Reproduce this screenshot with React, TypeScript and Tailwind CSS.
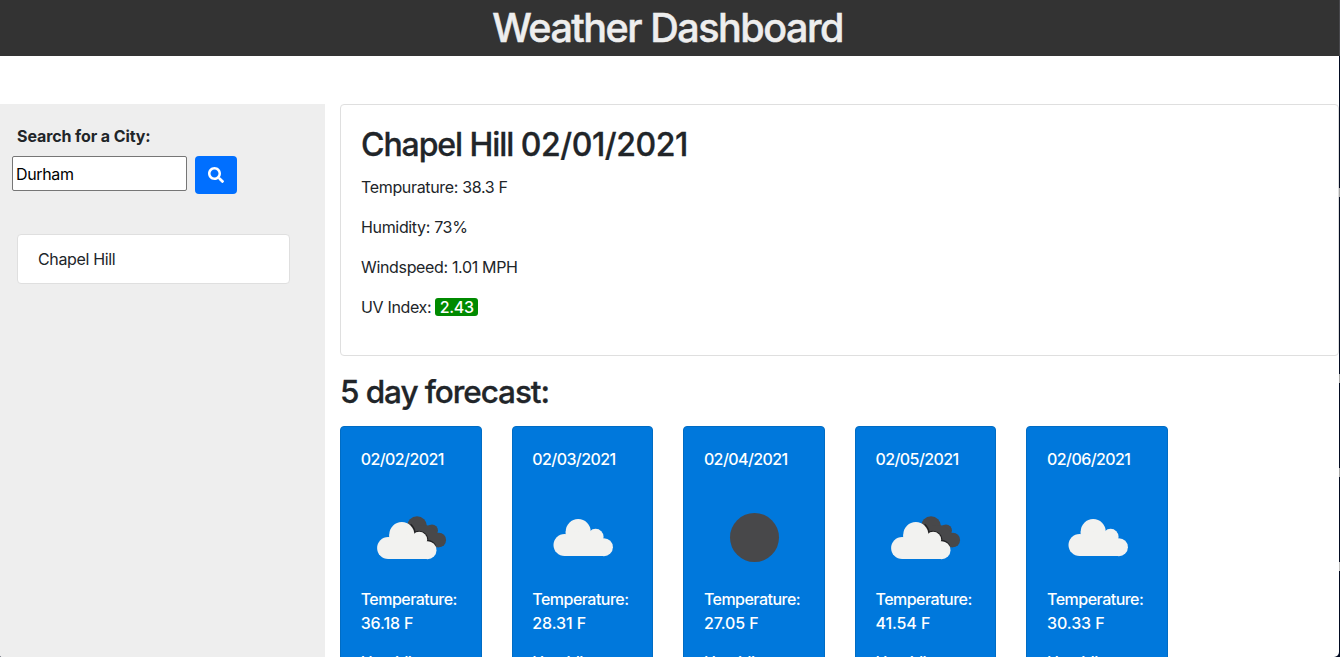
import { FaSearch } from "react-icons/fa";

type Sky = "broken" | "scattered" | "clear";

interface Day {
  date: string;
  sky: Sky;
  temperature: string;
  humidity: string;
}

const conditions = ["Tempurature: 38.3 F", "Humidity: 73%", "Windspeed: 1.01 MPH"];

const days: Day[] = [
  { date: "02/02/2021", sky: "broken", temperature: "36.18 F", humidity: "64%" },
  { date: "02/03/2021", sky: "scattered", temperature: "28.31 F", humidity: "62%" },
  { date: "02/04/2021", sky: "clear", temperature: "27.05 F", humidity: "61%" },
  { date: "02/05/2021", sky: "broken", temperature: "41.54 F", humidity: "66%" },
  { date: "02/06/2021", sky: "scattered", temperature: "30.33 F", humidity: "70%" },
];

function Cloud() {
  return (
    <g fill="#f2f2f0">
      <circle cx="27.2" cy="61" r="11.1" />
      <circle cx="40.8" cy="47.6" r="12.5" />
      <circle cx="58.2" cy="52.8" r="8" />
      <circle cx="66.5" cy="63.2" r="9" />
      <path d="M27.2 72.1H66.5V58L58 48L28.3 47.6V50Z" />
    </g>
  );
}

function SkyIcon({ sky }: { sky: Sky }) {
  return (
    <svg viewBox="0 0 100 100" className="block size-[100px]">
      {sky === "clear" && <circle cx="50.5" cy="50.5" r="24.5" fill="#48484a" />}
      {sky === "scattered" && (
        <g transform="translate(5.4 -3)">
          <Cloud />
        </g>
      )}
      {sky === "broken" && (
        <>
          <g fill="#48484a">
            <circle cx="56" cy="39.2" r="10" />
            <circle cx="71" cy="43.4" r="6" />
            <circle cx="77.8" cy="53" r="7.3" />
            <path d="M56 38L69 38.5L78 48V60.3H74L56 58Z" />
          </g>
          <path
            d="M49.6 37.3A13.4 13.4 0 0 1 54 45.4A8.8 8.8 0 0 1 66.7 53.4A10 10 0 0 1 74.4 58.6"
            fill="none"
            stroke="#222224"
            strokeWidth="1.4"
          />
          <Cloud />
        </>
      )}
    </svg>
  );
}

function DayCard({ day }: { day: Day }) {
  return (
    <article className="h-[320px] w-[141.6px] shrink-0 rounded border border-[#006cc4] bg-[#0078dc] py-5 pr-5 pl-[19.7px] font-medium tracking-[-0.52px] text-white">
      <p className="mb-4 tracking-[-0.58px]">{day.date}</p>
      <SkyIcon sky={day.sky} />
      <p className="mb-[15px]">
        Temperature: <span className="tracking-[-0.1px]">{day.temperature}</span>
      </p>
      <p>Humidity: {day.humidity}</p>
    </article>
  );
}

export default function App() {
  return (
    <div className="flex h-[657px] overflow-hidden bg-[#020b22] font-['Inter',sans-serif] text-base leading-6 text-[#212529]">
      <div className="flex min-w-0 flex-1 flex-col overflow-hidden rounded-br-[5px] rounded-bl-[2px] bg-white">
        <header className="flex h-14 shrink-0 items-center justify-center bg-[#333] pr-1">
          <h1 className="text-[39.5px] leading-12 font-medium tracking-[-1.48px] text-[#eee] [-webkit-text-stroke:0.5px_#eee]">
            Weather Dashboard
          </h1>
        </header>
        <div className="flex min-h-0 flex-1 pt-12">
          <aside className="w-[325px] shrink-0 bg-[#eee] pt-5 pl-3">
            <label htmlFor="city" className="block pl-[5px] font-bold tracking-[-0.1px]">
              Search for a City:
            </label>
            <div className="mt-2 flex items-start gap-2">
              <input
                id="city"
                defaultValue="Durham"
                className="h-[35px] w-[175px] rounded-xs border border-[#767676] bg-white px-[3px] tracking-[-0.35px] text-black outline-none"
              />
              <button aria-label="Search" className="flex h-[38px] w-[42px] items-center justify-center rounded bg-[#006fff] text-white">
                <FaSearch className="size-4" />
              </button>
            </div>
            <ul className="mt-10 ml-[5px] w-[273px] rounded border border-[#dfdfdf] bg-white">
              <li className="px-5 py-3 tracking-[-0.34px]">Chapel Hill</li>
            </ul>
          </aside>
          <main className="min-w-0 flex-1 pl-[15px]">
            <section className="h-[252px] rounded border border-[#dfdfdf] px-5 pt-5">
              <h2 className="text-[32px] leading-[39px] font-medium tracking-[-1.08px] [-webkit-text-stroke:0.3px_#212529]">
                Chapel Hill <span className="tracking-[-0.4px]">02/01/2021</span>
              </h2>
              <div className="mt-[11px] flex flex-col gap-4 tracking-[-0.34px]">
                {conditions.map((line) => (
                  <p key={line}>{line}</p>
                ))}
                <p className="flex items-center gap-1">
                  UV Index:
                  <span className="flex h-[18px] w-[43px] items-center justify-center rounded-[3px] bg-[#008a00] font-medium text-white">
                    2.43
                  </span>
                </p>
              </div>
            </section>
            <h2 className="mt-[17px] mb-[15px] text-[31.5px] leading-[38px] font-medium tracking-[-1.08px] [-webkit-text-stroke:0.3px_#212529]">
              5 day forecast:
            </h2>
            <div className="flex gap-[30px]">
              {days.map((day) => (
                <DayCard key={day.date} day={day} />
              ))}
            </div>
          </main>
        </div>
      </div>
      <div className="flex w-px shrink-0 flex-col">
        <div className="h-14 bg-[#48484c]" />
        <div className="mt-[132px] h-[9px] bg-[#a8a8a8]" />
        <div className="mt-[177px] h-[9px] bg-[#a8a8a8]" />
        <div className="mt-[85px] h-[9px] bg-[#a8a8a8]" />
        <div className="mt-[85px] h-[9px] bg-[#c0c0c0]" />
      </div>
    </div>
  );
}
